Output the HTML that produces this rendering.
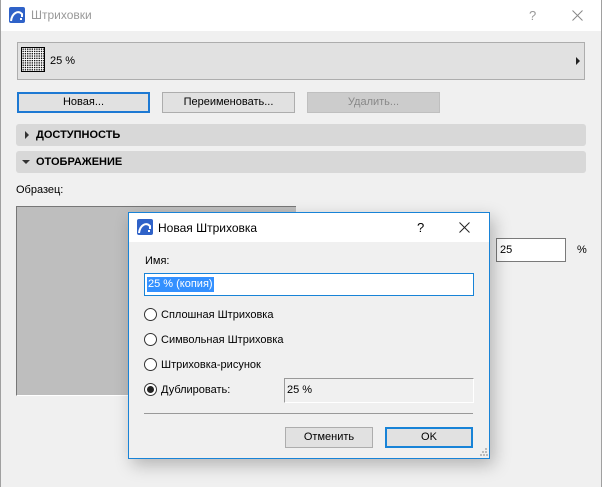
<!DOCTYPE html>
<html><head><meta charset="utf-8"><style>
*{box-sizing:border-box;margin:0;padding:0}
body{width:602px;height:487px;overflow:hidden;background:#f0f0f0;font-family:"Liberation Sans",sans-serif;font-size:11px;color:#000;position:relative}
.a{position:absolute}
.btn{position:absolute;background:#e1e1e1;border:1px solid #adadad;text-align:center;line-height:18px;font-size:11px}
.radio{position:absolute;width:13px;height:13px;border:1px solid #333;border-radius:50%;background:#fff}
</style></head><body>
<div class="a" style="left:0;top:0;width:1px;height:487px;background:#a0a0a0"></div>
<div class="a" style="right:0;top:0;width:1px;height:487px;background:#a0a0a0"></div>
<div class="a" style="left:1px;top:0;width:600px;height:31px;background:#fff"></div>
<svg class="a" style="left:9px;top:7px" width="16" height="16"><rect width="16" height="16" rx="2" fill="#2f62c8"/><path d="M2 14 C3 6 9 3 13 7 L13 10" stroke="#fff" stroke-width="2" fill="none"/><rect x="11" y="11" width="2" height="2" fill="#fff"/></svg>
<div class="a" style="left:31px;top:8px;font-size:12px;color:#999">Штриховки</div>
<div class="a" style="left:529px;top:8px;font-size:13px;color:#999">?</div>
<svg class="a" style="left:572px;top:10px" width="11" height="11"><path d="M0.5 0.5L10.5 10.5M10.5 0.5L0.5 10.5" stroke="#888" stroke-width="1"/></svg>

<div class="a" style="left:17px;top:42px;width:568px;height:38px;background:#e1e1e1;border:1px solid #adadad"></div>
<div class="a" style="left:21px;top:47px;width:24px;height:25px;border:1px solid #000;background-image:radial-gradient(#000 0.6px,#fff 0.8px);background-size:2.3px 2.3px"></div>
<div class="a" style="left:50px;top:55px">25 %</div>
<div class="a" style="left:576px;top:57px;width:0;height:0;border-left:4px solid #222;border-top:4px solid transparent;border-bottom:4px solid transparent"></div>

<div class="btn" style="left:17px;top:92px;width:133px;height:21px;border:2px solid #1d79d3;line-height:17px">Новая...</div>
<div class="btn" style="left:162px;top:92px;width:133px;height:21px">Переименовать...</div>
<div class="btn" style="left:307px;top:92px;width:133px;height:21px;background:#ccc;border-color:#bfbfbf;color:#888">Удалить...</div>

<div class="a" style="left:16px;top:124px;width:570px;height:22px;background:#d8d8d8;border-radius:3px"></div>
<div class="a" style="left:25px;top:131px;width:0;height:0;border-left:4px solid #333;border-top:4px solid transparent;border-bottom:4px solid transparent"></div>
<div class="a" style="left:36px;top:129px;font-weight:bold">ДОСТУПНОСТЬ</div>
<div class="a" style="left:16px;top:151px;width:570px;height:22px;background:#d8d8d8;border-radius:3px"></div>
<div class="a" style="left:22px;top:160px;width:0;height:0;border-top:4px solid #333;border-left:4px solid transparent;border-right:4px solid transparent"></div>
<div class="a" style="left:36px;top:156px;font-weight:bold">ОТОБРАЖЕНИЕ</div>
<div class="a" style="left:16px;top:184px">Образец:</div>
<div class="a" style="left:16px;top:206px;width:280px;height:190px;background:#bebebe;border-top:1px solid #777;border-left:1px solid #777;border-bottom:1px solid #fff"></div>
<div class="a" style="left:496px;top:238px;width:70px;height:24px;background:#fff;border:1px solid #7a7a7a;padding:5px 3px">25</div>
<div class="a" style="left:577px;top:244px">%</div>

<!-- dialog -->
<div class="a" style="left:128px;top:212px;width:362px;height:247px;background:#f0f0f0;border:1px solid #1883d7;box-shadow:4px 6px 16px rgba(0,0,0,.25)"></div>
<div class="a" style="left:129px;top:213px;width:360px;height:29px;background:#fff"></div>
<svg class="a" style="left:137px;top:219px" width="16" height="16"><rect width="16" height="16" rx="2" fill="#2f62c8"/><path d="M2 14 C3 6 9 3 13 7 L13 10" stroke="#fff" stroke-width="2" fill="none"/><rect x="11" y="11" width="2" height="2" fill="#fff"/></svg>
<div class="a" style="left:158px;top:221px;font-size:12px">Новая Штриховка</div>
<div class="a" style="left:417px;top:220px;font-size:13px">?</div>
<svg class="a" style="left:459px;top:222px" width="11" height="11"><path d="M0.5 0.5L10.5 10.5M10.5 0.5L0.5 10.5" stroke="#222" stroke-width="1"/></svg>
<div class="a" style="left:145px;top:255px">Имя:</div>
<div class="a" style="left:144px;top:273px;width:330px;height:23px;background:#fff;border:1px solid #1883d7"></div>
<div class="a" style="left:147px;top:277px;height:15px;background:#3390ff;color:#fff;padding:1px 1px;line-height:13px">25 % (копия)</div>
<div class="radio" style="left:144px;top:308px"></div><div class="a" style="left:161px;top:309px">Сплошная Штриховка</div>
<div class="radio" style="left:144px;top:333px"></div><div class="a" style="left:161px;top:334px">Символьная Штриховка</div>
<div class="radio" style="left:144px;top:358px"></div><div class="a" style="left:161px;top:359px">Штриховка-рисунок</div>
<div class="radio" style="left:144px;top:383px"></div><div class="a" style="left:147px;top:386px;width:7px;height:7px;border-radius:50%;background:#222"></div>
<div class="a" style="left:161px;top:384px">Дублировать:</div>
<div class="a" style="left:284px;top:378px;width:190px;height:25px;background:#f0f0f0;border-top:1px solid #999;border-left:1px solid #999;border-right:1px solid #fff;border-bottom:1px solid #fff;padding:5px 2px">25 %</div>
<div class="a" style="left:144px;top:413px;width:329px;height:1px;background:#999"></div>
<div class="btn" style="left:285px;top:427px;width:88px;height:21px">Отменить</div>
<div class="btn" style="left:385px;top:427px;width:88px;height:21px;border:2px solid #1883d7;line-height:17px">OK</div>
<svg class="a" style="left:480px;top:448px" width="8" height="8"><rect x="5" y="0" width="2" height="2" fill="#bbb"/><rect x="2" y="3" width="2" height="2" fill="#bbb"/><rect x="5" y="3" width="2" height="2" fill="#bbb"/><rect x="0" y="6" width="2" height="2" fill="#bbb"/><rect x="3" y="6" width="2" height="2" fill="#bbb"/><rect x="6" y="6" width="2" height="2" fill="#bbb"/></svg>
</body></html>
